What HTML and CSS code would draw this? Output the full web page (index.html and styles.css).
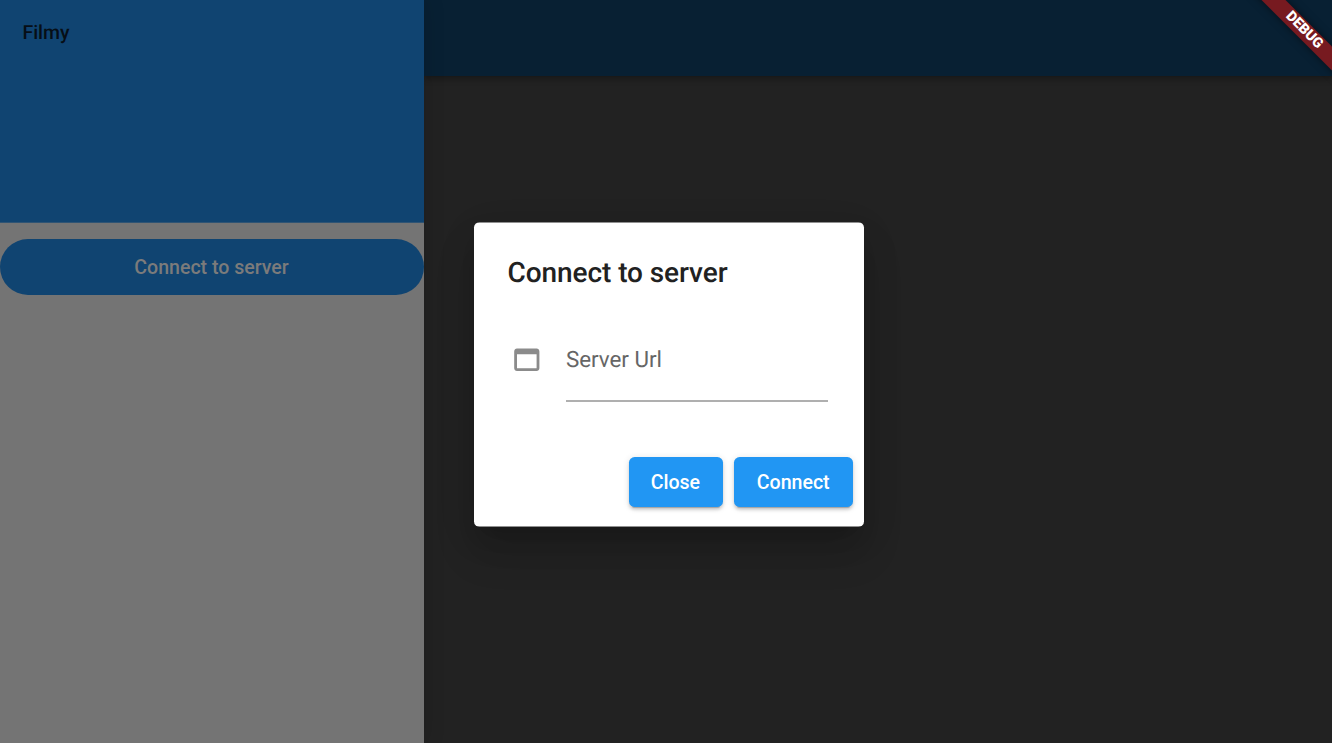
FILE: index.html
```html
<!DOCTYPE html>
<html lang="en">
<head>
<meta charset="utf-8">
<title>Filmy</title>
<link rel="stylesheet" href="styles.css">
</head>
<body>
<div class="app">
  <aside class="drawer">
    <header class="drawer-header">Filmy</header>
    <button class="drawer-button">Connect to server</button>
  </aside>
  <main class="page"><div class="app-bar"></div></main>
</div>
<div class="overlay">
  <section class="dialog" role="dialog">
    <h1 class="dialog-title">Connect to server</h1>
    <div class="field">
      <svg class="field-icon" viewBox="0 0 24 24"><path d="M19 4H5c-1.11 0-2 .9-2 2v12c0 1.1.89 2 2 2h14c1.1 0 2-.9 2-2V6c0-1.1-.89-2-2-2zm0 14H5V8h14v10z"/></svg>
      <div class="field-input">Server Url</div>
    </div>
    <div class="actions">
      <button class="action close">Close</button>
      <button class="action connect">Connect</button>
    </div>
  </section>
</div>
<div class="debug"><span class="debug-band">DEBUG</span></div>
</body>
</html>
```
FILE: styles.css
```css
* { box-sizing: border-box; }
body { margin: 0; font-family: Roboto, sans-serif; overflow: hidden; text-rendering: geometricPrecision; }
button { font: inherit; border: 0; padding: 0; font-weight: 500; }
.app { display: flex; height: 743px; background: #222; }
.drawer { width: 424px; background: #747474; z-index: 1; box-shadow: 0 0 20px rgba(0,0,0,.15); }
.drawer-header { height: 223px; padding: 20px 22.4px; background: #104471; border-bottom: 1px solid #2f5474; color: #060e16; font-size: 19.5px; line-height: 25px; font-weight: 500; }
.drawer-button { display: block; width: 424px; height: 56px; margin-top: 16px; padding-right: 1px; border-radius: 28px; background: #104471; color: #7b7b7b; font-size: 19.6px; letter-spacing: -.03px; }
.page { flex: 1; }
.app-bar { height: 76px; background: #082033; box-shadow: 0 3px 6px rgba(0,0,0,.3); }
.overlay { position: absolute; inset: 0; padding: 222px 0 0 474px; z-index: 2; }
.dialog { width: 390px; height: 305px; border-radius: 5.6px; background: linear-gradient(#909090 1px, #fff 1px, #fff 304px, #909090 304px); padding: 34px 11px 20px 33.6px; display: flex; flex-direction: column; box-shadow: 0 15px 21px -10px rgba(0,0,0,.16), 0 26px 40px rgba(0,0,0,.14), 0 10px 40px rgba(0,0,0,.08); }
.dialog-title { margin: 0; font-size: 28px; line-height: 34px; font-weight: 500; color: #212121; letter-spacing: -.08px; }
.field { display: flex; margin-top: 34px; }
.field-icon { width: 33.6px; height: 33.6px; margin: 19px 22.4px 0 2.4px; fill: #8b8b8b; }
.field-input { width: 262px; height: 78px; padding-top: 23px; border-bottom: 2px solid #afafaf; color: #666; font-size: 22.4px; line-height: 26px; letter-spacing: -.03px; }
.actions { display: flex; justify-content: flex-end; gap: 11.2px; margin-top: auto; }
.action { height: 50px; padding-right: 1px; border-radius: 5.6px; background: #2196f3; color: #fff; font-size: 19.6px; letter-spacing: -.03px; box-shadow: 0 4px 1px -3px rgba(0,0,0,.2), 0 3px 3px rgba(0,0,0,.14), 0 1px 7px rgba(0,0,0,.12); }
.close { width: 94.6px; }
.connect { width: 118.6px; }
.debug { position: absolute; top: 0; right: 0; width: 100px; height: 100px; overflow: hidden; z-index: 3; }
.debug-band { position: absolute; width: 140px; height: 17px; left: 2px; top: 22px; transform: rotate(45deg); background: #771a20; box-shadow: 0 0 8px rgba(0,0,0,.5); color: #fff; font-size: 14.3px; line-height: 17px; font-weight: 900; text-align: center; }
```
